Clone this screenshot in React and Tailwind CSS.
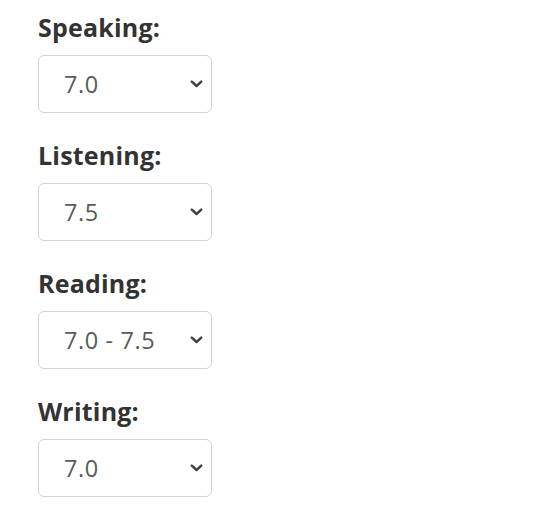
import React, { useState } from 'react';

const fields = [
  { key: 'speaking', label: 'Speaking:', value: '7.0' },
  { key: 'listening', label: 'Listening:', value: '7.5' },
  { key: 'reading', label: 'Reading:', value: '7.0 - 7.5' },
  { key: 'writing', label: 'Writing:', value: '7.0' },
];

const options = ['6.0', '6.5', '7.0', '7.0 - 7.5', '7.5', '8.0'];

const ScoreSelect = ({ label, value, onChange }) => (
  <div className="mb-[27px]">
    <label className="block h-[30px] leading-[30px] text-[25px] font-bold tracking-[0.2px] text-[#333]">{label}</label>
    <div className="relative mt-[13px] w-[174px]">
      <select
        value={value}
        onChange={(e) => onChange(e.target.value)}
        className="block h-[58px] w-full appearance-none rounded-md border border-[#d4d4d4] bg-white pl-[25px] pr-10 pt-[1px] text-[23.5px] tracking-[0.6px] text-[#5a5a5a] outline-none"
      >
        {options.map((o) => (
          <option key={o} value={o}>{o}</option>
        ))}
      </select>
      <svg
        className="pointer-events-none absolute right-[9px] top-1/2 -translate-y-1/2"
        width="13"
        height="8"
        viewBox="0 0 13 8"
        fill="none"
      >
        <path d="M1.8 1.6 L6.5 6 L11.2 1.6" stroke="#444" strokeWidth="2.5" strokeLinecap="round" strokeLinejoin="round" />
      </svg>
    </div>
  </div>
);

const App = () => {
  const [values, setValues] = useState(
    Object.fromEntries(fields.map((f) => [f.key, f.value]))
  );

  return (
    <div className="min-h-[509px] bg-white pl-[38px] pt-[12px] font-['Open_Sans',sans-serif]">
      {fields.map((f) => (
        <ScoreSelect
          key={f.key}
          label={f.label}
          value={values[f.key]}
          onChange={(v) => setValues({ ...values, [f.key]: v })}
        />
      ))}
    </div>
  );
};

export default App;
